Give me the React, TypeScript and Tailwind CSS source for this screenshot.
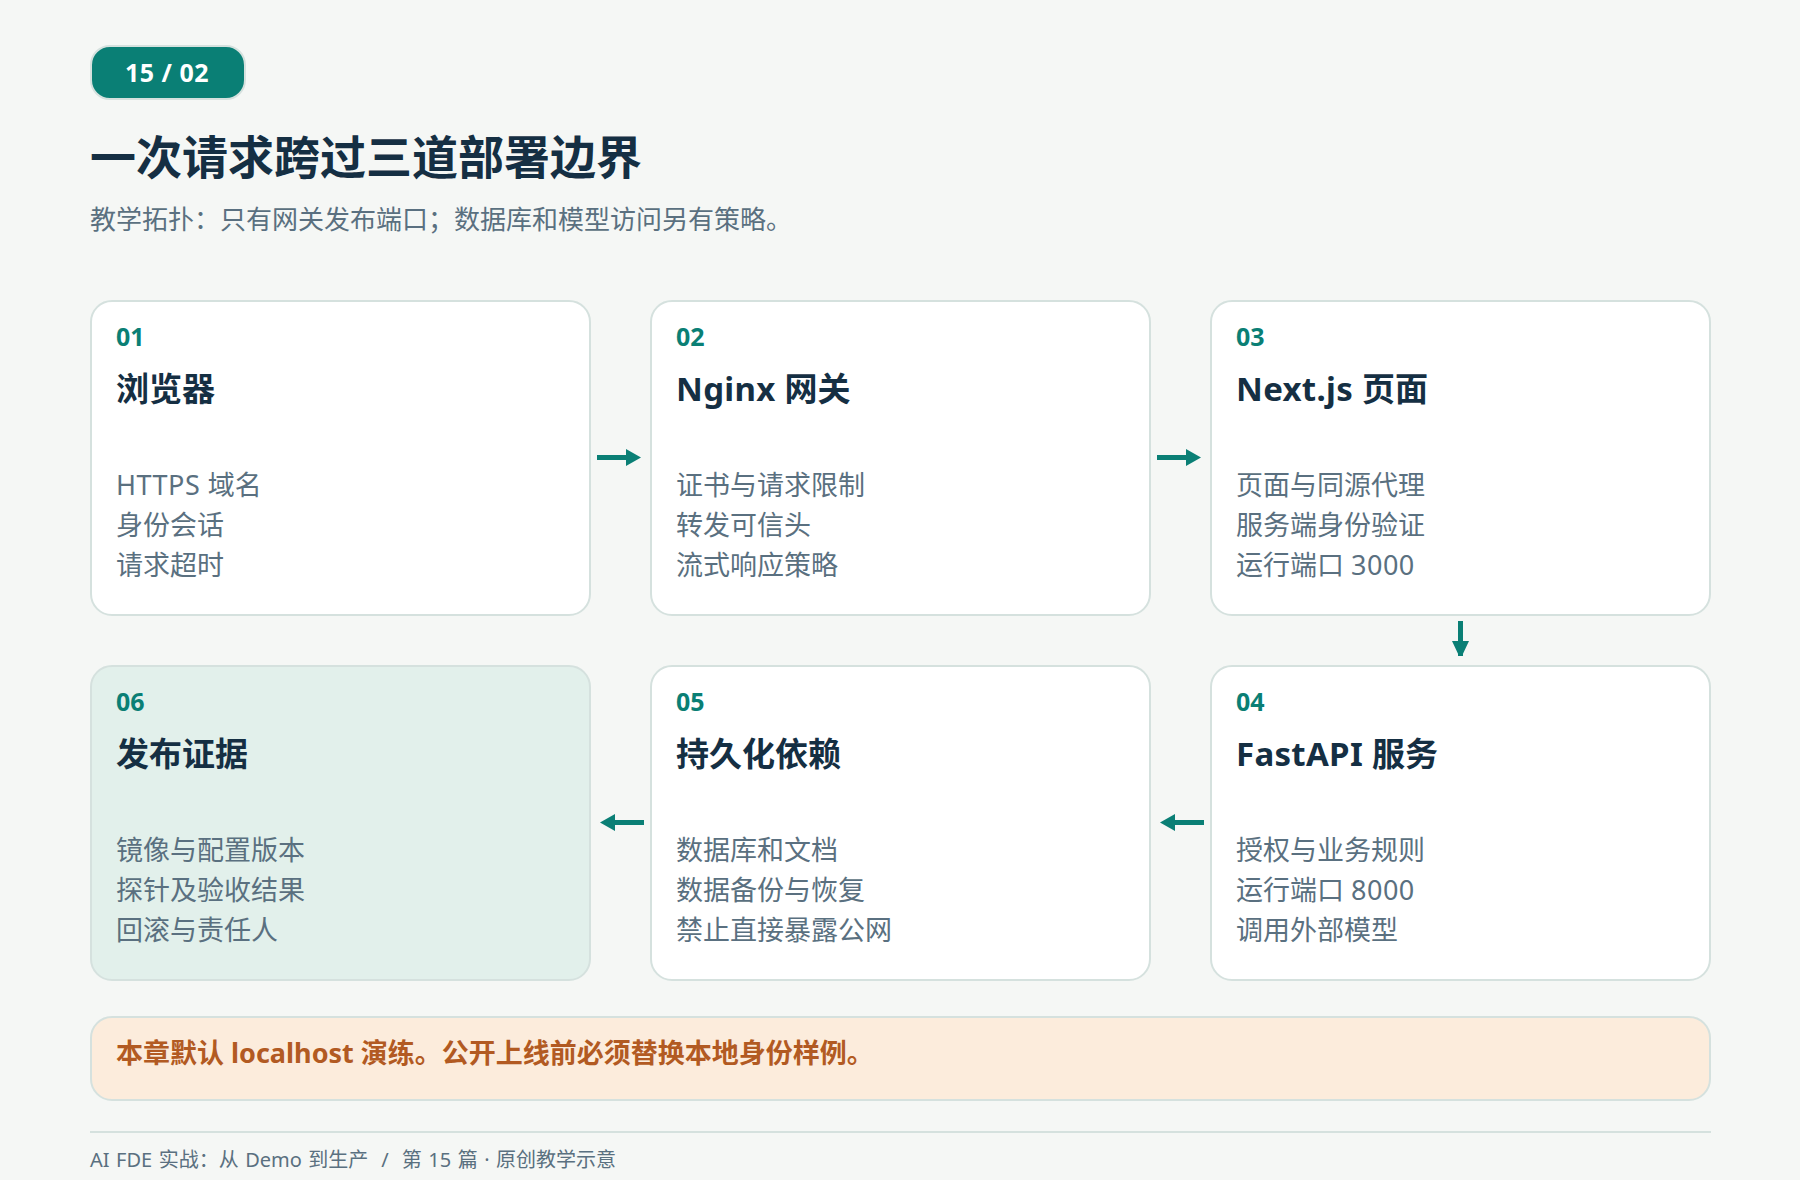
const STEPS: Record<string, { num: string; title: string; lines: string[]; tint?: boolean }> = {
  a: { num: '01', title: '浏览器', lines: ['HTTPS 域名', '身份会话', '请求超时'] },
  b: { num: '02', title: 'Nginx 网关', lines: ['证书与请求限制', '转发可信头', '流式响应策略'] },
  c: { num: '03', title: 'Next.js 页面', lines: ['页面与同源代理', '服务端身份验证', '运行端口 3000'] },
  d: { num: '04', title: 'FastAPI 服务', lines: ['授权与业务规则', '运行端口 8000', '调用外部模型'] },
  e: { num: '05', title: '持久化依赖', lines: ['数据库和文档', '数据备份与恢复', '禁止直接暴露公网'] },
  f: { num: '06', title: '发布证据', lines: ['镜像与配置版本', '探针及验收结果', '回滚与责任人'], tint: true },
};

// latin runs sit a little wider than the font's own advances in the picture
function Spaced({ text, tracking }: { text: string; tracking: string }) {
  return (
    <>
      {text.split(/([A-Za-z0-9.]+ ?)/).map((part, i) =>
        i % 2 ? <span key={i} className={tracking}>{part}</span> : part,
      )}
    </>
  );
}

function Card({ id }: { id: string }) {
  const step = STEPS[id];
  return (
    <div className={`rounded-[22px] border-2 border-[#d5e1de] px-6 pt-[18px] ${step.tint ? 'bg-[#e2f0eb]' : 'bg-white'}`}>
      <div className="text-[25px] leading-[32px] font-bold text-[#0a7f75]">{step.num}</div>
      <h2 className="mt-[14px] h-[99px] text-[33px] leading-[46px] font-bold text-[#152f43]">
        <Spaced text={step.title} tracking="tracking-[0.3px]" />
      </h2>
      <div className="text-[27px] leading-[40px] text-[#5a7080]">
        {step.lines.map((line) => (
          <div key={line}><Spaced text={line} tracking="tracking-[0.5px]" /></div>
        ))}
      </div>
    </div>
  );
}

function Arrow({ dir }: { dir: 'right' | 'left' | 'down' }) {
  if (dir === 'down') {
    return (
      <svg width="17" height="35" viewBox="0 0 17 35" className="mt-[5px]">
        <path d="M6 0h5v20h6l-6 12.800V35H6v-2.200L0 20h6z" fill="#0a7f75" />
      </svg>
    );
  }
  return (
    <svg width="44" height="17" viewBox="0 0 44 17" className={dir === 'left' ? 'mb-[1px] ml-[9px] rotate-180' : 'mb-[1px] ml-[6px]'}>
      <path d="M0 6h29V0l15 8.500L29 17v-6H0z" fill="#0a7f75" />
    </svg>
  );
}

export default function App() {
  return (
    <div className="h-[1180px] w-[1800px] overflow-hidden bg-[#f5f7f5] pr-[89px] pl-[90px] pt-[45px] font-['Noto_Sans','Noto_Sans_CJK_SC',sans-serif]">
      <div className="flex h-[55px] w-[156px] items-center justify-center rounded-[20px] border-2 border-[#d5e1de] bg-[#0a7f75] pr-[2px] text-[25px] font-bold tracking-[0.5px] text-white">
        15 / 02
      </div>
      <h1 className="mt-[25px] text-[46px] leading-[62px] font-bold text-[#152f43]">一次请求跨过三道部署边界</h1>
      <p className="mt-[14px] text-[26px] leading-[36px] text-[#5a7080]">教学拓扑：只有网关发布端口；数据库和模型访问另有策略。</p>

      <div className="mt-[63px] grid grid-cols-[501px_59px_501px_59px_501px] grid-rows-[316px_49px_316px]">
        <Card id="a" />
        <div className="flex items-center"><Arrow dir="right" /></div>
        <Card id="b" />
        <div className="flex items-center"><Arrow dir="right" /></div>
        <Card id="c" />

        <div className="col-start-5 flex justify-center"><Arrow dir="down" /></div>

        <Card id="f" />
        <div className="flex items-center"><Arrow dir="left" /></div>
        <Card id="e" />
        <div className="flex items-center"><Arrow dir="left" /></div>
        <Card id="d" />
      </div>

      <div className="mt-[35px] flex h-[85px] items-center rounded-[22px] border-2 border-[#d5e1de] bg-[#fcecdc] px-6 pb-[10px] text-[27px] font-bold text-[#b25a22]">
        本章默认 localhost 演练。公开上线前必须替换本地身份样例。
      </div>

      <div className="mt-[30px] border-t-2 border-[#d5e1de] pt-[12px] text-[20px] leading-[30px] text-[#5a7080] [word-spacing:1.3px]">
        AI FDE 实战：从 Demo 到生产 &nbsp;/&nbsp; 第 15 篇 · 原创教学示意
      </div>
    </div>
  );
}
